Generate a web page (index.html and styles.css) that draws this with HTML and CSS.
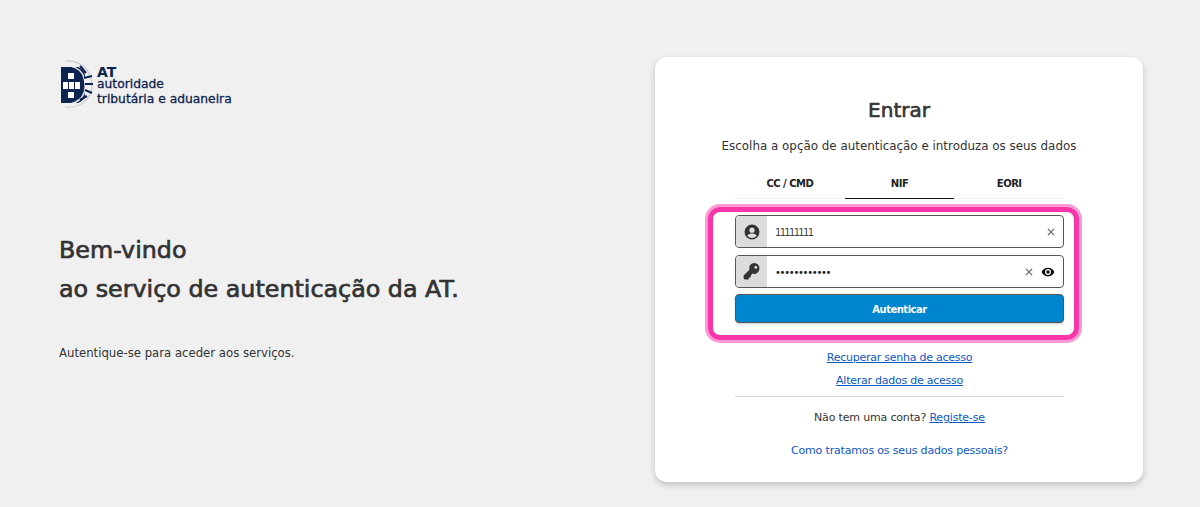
FILE: index.html
```html
<!DOCTYPE html>
<html lang="pt">
<head>
    <meta charset="UTF-8">
    <meta name="viewport" content="width=device-width, initial-scale=1.0">
    <title>Autenticação</title>
    <link rel="stylesheet" href="styles.css">
</head>
<body>
<div class="page">
    <div class="intro">
        <div class="logo">
            <svg class="logo_mark" width="35" height="48" viewBox="0 0 35 48">
                <path d="M2 7H19C23 9 25 11 26 15V37C24 40 22 42 19 43H2Z" fill="#0d2350"/>
                <path d="M6 1C15 0 25 4 30 13C34 22 34 31 29 38C24 45 15 48 6 47" fill="none" stroke="#c4c9d2" stroke-width="1.2"/>
                <path d="M5 5C13 5 21 9 24 15C27 23 27 31 23 37C20 41 13 45 5 45" fill="none" stroke="#f0f0f0" stroke-width="1.4"/>
                <path d="M21 6L27 13M25 18L33 16M26 24H34M26 30L33 33M21 40L28 36" stroke="#0d2350" stroke-width="2.2" fill="none"/>
                <rect x="9" y="13" width="6" height="6" fill="#fff"/>
                <rect x="4" y="22" width="5" height="7" fill="#fff"/>
                <rect x="10" y="22" width="5" height="7" fill="#fff"/>
                <rect x="16" y="22" width="5" height="7" fill="#fff"/>
                <rect x="9" y="32" width="6" height="6" fill="#fff"/>
            </svg>
            <div class="logo_text">
                <div class="logo_at">AT</div>
                <div class="logo_line">autoridade</div>
                <div class="logo_line">tributária e aduaneira</div>
            </div>
        </div>
        <h1 class="welcome">Bem-vindo<br>ao serviço de autenticação da AT.</h1>
        <p class="lead">Autentique-se para aceder aos serviços.</p>
    </div>
    <div class="card">
        <h2 class="card_title">Entrar</h2>
        <p class="card_sub">Escolha a opção de autenticação e introduza os seus dados</p>
        <div class="card_inner">
            <div class="tabs">
                <div class="tab">CC / CMD</div>
                <div class="tab tab_active">NIF</div>
                <div class="tab">EORI</div>
            </div>
            <div class="highlight">
                <div class="field">
                    <div class="field_icon">
                        <svg width="18" height="18" viewBox="0 0 24 24"><path fill="#333" d="M12 2a10 10 0 1 0 0 20a10 10 0 0 0 0-20zm0 4a3.500 3.500 0 1 1 0 7a3.500 3.500 0 0 1 0-7zm0 14a8 8 0 0 1-6.200-3c.6-1.900 3.700-3 6.200-3s5.600 1.100 6.200 3a8 8 0 0 1-6.200 3z"/></svg>
                    </div>
                    <div class="field_value">11111111</div>
                    <svg class="clear" width="8" height="8" viewBox="0 0 9 9"><path d="M1 1L8 8M8 1L1 8" stroke="#666" stroke-width="1.4"/></svg>
                </div>
                <div class="field">
                    <div class="field_icon">
                        <svg width="19" height="19" viewBox="0 0 24 24"><path fill="#333" d="M22 8.500a6.500 6.500 0 0 1-8.700 6.100L11 17v2.500H8.500V22H3.500L2 20.500v-3.300l7.400-7.400A6.500 6.500 0 1 1 22 8.500zM17.500 5a1.800 1.800 0 1 0 0 3.600a1.800 1.800 0 0 0 0-3.600z"/></svg>
                    </div>
                    <div class="field_value field_dots">••••••••••••</div>
                    <svg class="clear" width="8" height="8" viewBox="0 0 9 9"><path d="M1 1L8 8M8 1L1 8" stroke="#666" stroke-width="1.4"/></svg>
                    <svg class="eye" width="14" height="14" viewBox="0 0 24 24"><path fill="#111" d="M12 4.500C7 4.500 2.700 7.600 1 12c1.700 4.400 6 7.500 11 7.500s9.300-3.100 11-7.500c-1.700-4.400-6-7.500-11-7.500zM12 17a5 5 0 1 1 0-10a5 5 0 0 1 0 10zm0-8a3 3 0 1 0 0 6a3 3 0 0 0 0-6z"/></svg>
                </div>
                <button class="button">Autenticar</button>
            </div>
            <a class="link" href="#">Recuperar senha de acesso</a>
            <a class="link link_second" href="#">Alterar dados de acesso</a>
            <div class="signup">Não tem uma conta? <a href="#">Registe-se</a></div>
            <a class="link_plain" href="#">Como tratamos os seus dados pessoais?</a>
        </div>
    </div>
</div>
</body>
</html>
```
FILE: styles.css
```css
* {
    box-sizing: border-box;
    margin: 0;
    padding: 0;
}
body {
    background: #f0f0f0;
    font-family: 'DejaVu Sans', sans-serif;
    color: #333;
    height: 507px;
    overflow: hidden;
}
.page {
    display: flex;
    justify-content: space-between;
    padding: 57px 57px 0 59px;
}
.logo {
    display: flex;
    align-items: flex-start;
    gap: 3px;
    margin-top: 3px;
}
.logo_text {
    color: #0d2350;
    padding-top: 7px;
}
.logo_at {
    font-size: 14px;
    line-height: 11px;
    font-weight: 700;
    margin-bottom: -1px;
}
.logo_line {
    font-size: 12.3px;
    line-height: 15px;
    -webkit-text-stroke: 0.3px #0d2350;
}
.welcome {
    margin-top: 123px;
    font-size: 23.8px;
    font-weight: 400;
    line-height: 39px;
    -webkit-text-stroke: 0.7px #333;
}
.lead {
    margin-top: 36px;
    font-size: 11.7px;
    line-height: 16px;
}
.card {
    width: 488px;
    height: 425px;
    background: #fff;
    border-radius: 12px;
    box-shadow: 0 3px 6px rgba(0, 0, 0, 0.2);
    padding-top: 41px;
    text-align: center;
}
.card_title {
    font-size: 20px;
    font-weight: 400;
    line-height: 24px;
    -webkit-text-stroke: 0.6px #333;
}
.card_sub {
    margin-top: 16px;
    font-size: 11.9px;
    line-height: 16px;
}
.card_inner {
    width: 329px;
    margin: 17px 0 0 80px;
}
.tabs {
    display: flex;
    border-bottom: 1px solid #eee;
}
.tab {
    flex: 1;
    font-size: 10px;
    font-weight: 700;
    letter-spacing: -0.5px;
    line-height: 14px;
    padding: 6px 0 7px;
    color: #222;
    margin-bottom: -1px;
    border-bottom: 1px solid transparent;
}
.tab_active {
    border-bottom-color: #111;
}
.highlight {
    margin: 8px -15px 0 -27px;
    padding: 3px 10px 12px 22px;
    border: 5px solid #f935a9;
    border-radius: 12px;
    box-shadow: 0 0 0 3px #fd9ad4;
    display: flex;
    flex-direction: column;
}
.field {
    display: flex;
    align-items: center;
    height: 33px;
    margin-bottom: 7px;
    border: 1px solid #555;
    border-radius: 4px;
    overflow: hidden;
}
.field + .field {
    margin-bottom: 6px;
}
.field_icon {
    width: 31px;
    height: 100%;
    background: #dcdcdc;
    display: flex;
    align-items: center;
    justify-content: center;
}
.field_value {
    flex: 1;
    text-align: left;
    padding: 1px 0 0 8px;
    font-size: 10px;
    letter-spacing: -1.7px;
    color: #444;
}
.field_dots {
    color: #222;
    letter-spacing: -1.3px;
}
.clear {
    margin-right: 8px;
}
.eye {
    margin-right: 8px;
}
.button {
    height: 29px;
    padding-top: 1px;
    border: 1px solid #555;
    border-radius: 4px;
    background: #0085cf;
    color: #fff;
    font-family: inherit;
    font-size: 10px;
    font-weight: 700;
    letter-spacing: -0.5px;
    box-shadow: 0 1px 2px rgba(0, 0, 0, 0.2);
}
.link, .link_plain, .signup a {
    color: #0d57c4;
}
.link {
    display: block;
    margin-top: 10px;
    font-size: 11px;
    letter-spacing: -0.25px;
    line-height: 16px;
}
.link_second {
    margin-top: 7px;
    padding-bottom: 7px;
    border-bottom: 1px solid #d8d8d8;
}
.signup {
    margin-top: 13px;
    font-size: 11px;
    letter-spacing: -0.17px;
    line-height: 16px;
}
.link_plain {
    display: block;
    margin-top: 17px;
    font-size: 11px;
    letter-spacing: -0.17px;
    line-height: 16px;
    text-decoration: none;
}
```
